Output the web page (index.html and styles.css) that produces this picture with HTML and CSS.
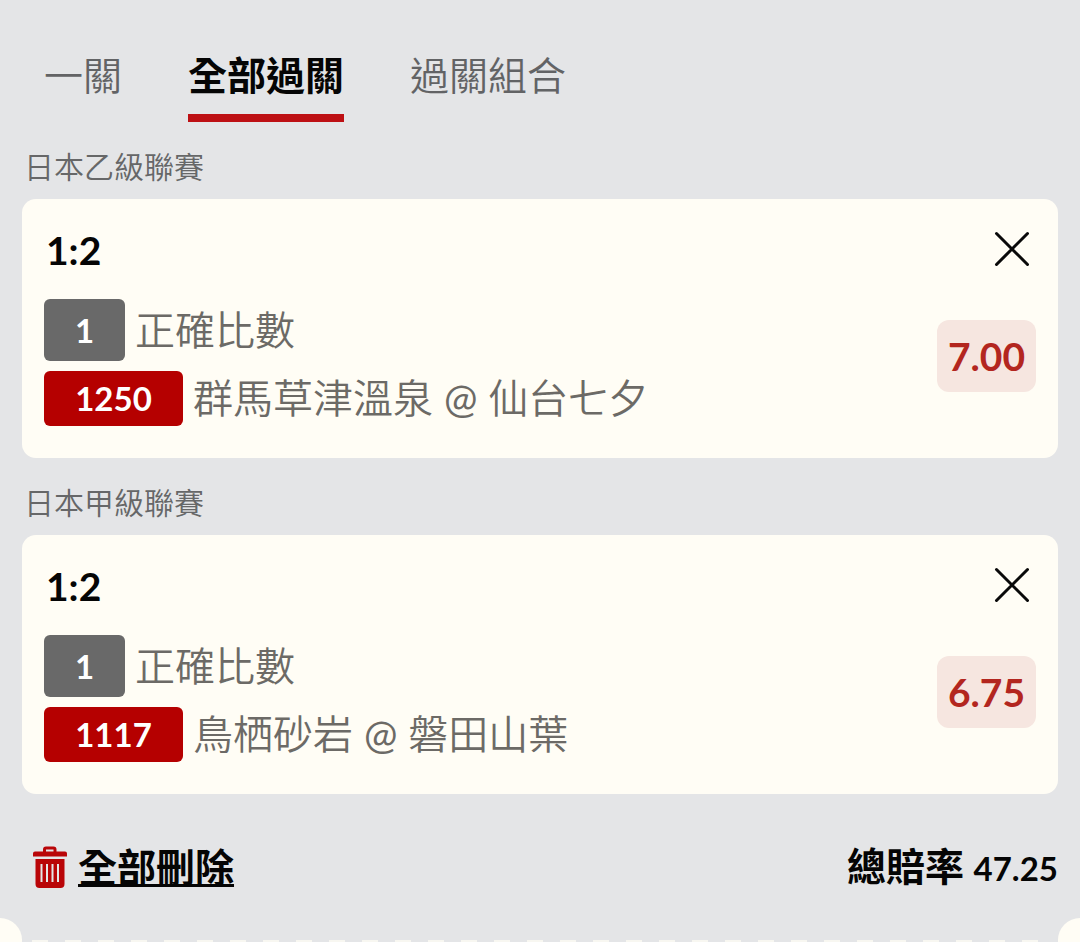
FILE: index.html
```html
<!DOCTYPE html>
<html lang="zh-Hant">
<head>
<meta charset="utf-8">
<meta name="viewport" content="width=device-width, initial-scale=1">
<title>過關</title>
<link rel="stylesheet" href="styles.css">
</head>
<body>
<main class="slip">
  <nav class="tabs">
    <button class="tab" type="button">一關</button>
    <button class="tab tab-active" type="button">全部過關</button>
    <button class="tab" type="button">過關組合</button>
  </nav>

  <section class="league">
    <h2 class="league-name">日本乙級聯賽</h2>
    <article class="card">
      <div class="card-main">
        <h3 class="pick">1:2</h3>
        <div class="bet">
          <div class="row"><span class="tag tag-count">1</span><span>正確比數</span></div>
          <div class="row"><span class="tag tag-match">1250</span><span>群馬草津溫泉 <span class="at">@</span> 仙台七夕</span></div>
        </div>
      </div>
      <div class="card-side">
        <button class="close" type="button" aria-label="移除">
          <svg class="close-icon" viewBox="0 0 36 36" aria-hidden="true"><path d="M2.5 2.5 33.5 33.5M33.5 2.5 2.5 33.5"/></svg>
        </button>
        <span class="odds">7.00</span>
      </div>
    </article>
  </section>

  <section class="league">
    <h2 class="league-name">日本甲級聯賽</h2>
    <article class="card">
      <div class="card-main">
        <h3 class="pick">1:2</h3>
        <div class="bet">
          <div class="row"><span class="tag tag-count">1</span><span>正確比數</span></div>
          <div class="row"><span class="tag tag-match">1117</span><span>鳥栖砂岩 <span class="at">@</span> 磐田山葉</span></div>
        </div>
      </div>
      <div class="card-side">
        <button class="close" type="button" aria-label="移除">
          <svg class="close-icon" viewBox="0 0 36 36" aria-hidden="true"><path d="M2.5 2.5 33.5 33.5M33.5 2.5 2.5 33.5"/></svg>
        </button>
        <span class="odds">6.75</span>
      </div>
    </article>
  </section>

  <footer class="summary">
    <button class="clear" type="button">
      <svg class="trash" viewBox="0 0 34 42" aria-hidden="true">
        <path class="trash-line" d="M11.5 6V3.5Q11.5 2 13 2H20.500Q22 2 22 3.500V6"/>
        <path class="trash-fill" fill-rule="evenodd" d="M2 5.500H32Q34 5.500 34 7.500V10.500H0V7.500Q0 5.500 2 5.500ZM2.500 13H31.500V38Q31.500 42 27.500 42H6.500Q2.500 42 2.500 38ZM7.500 18V36H9.500V18ZM13 18V36H15V18ZM18.500 18V36H20.500V18ZM24 18V36H26V18Z"/>
      </svg>
      <span class="clear-text">全部刪除</span>
    </button>
    <p class="total">總賠率 <span class="total-value">47.25</span></p>
  </footer>
</main>
<div class="perforation" aria-hidden="true">
  <span class="notch notch-left"></span>
  <span class="dashes"></span>
  <span class="notch notch-right"></span>
</div>
</body>
</html>
```
FILE: styles.css
```css
* { box-sizing: border-box; }
body {
  margin: 0;
  background: #e4e5e7;
  color: #050505;
  font-family: Lato, "Noto Sans CJK TC", sans-serif;
  overflow-x: hidden;
}
h2, h3, p { margin: 0; }
button {
  padding: 0;
  border: 0;
  background: none;
  color: inherit;
  font: inherit;
  cursor: pointer;
}
.slip { padding: 44px 22px 0; }
.tabs {
  display: flex;
  gap: 66px;
  padding-left: 22px;
}
.tab {
  height: 78px;
  padding-bottom: 8px;
  border-bottom: 8px solid transparent;
  color: #626365;
  font-size: 39px;
  line-height: 62px;
  font-weight: 350;
}
.tab-active {
  border-color: #bd1014;
  color: #050505;
  font-weight: 700;
}
.league-name {
  padding: 22px 0 11px 2px;
  color: #666768;
  font-size: 30px;
  line-height: 44px;
  font-weight: 350;
}
.card {
  display: flex;
  justify-content: space-between;
  padding: 24px 22px 32px;
  border-radius: 14px;
  background: #fffdf5;
}
.card-main {
  display: grid;
  gap: 22px;
}
.card-side {
  display: flex;
  flex-direction: column;
  align-items: flex-end;
  gap: 45px;
}
.pick {
  padding-left: 2px;
  font-size: 39px;
  line-height: 54px;
  font-weight: 700;
}
.close {
  display: flex;
  padding: 8px 6px 8px 0;
}
.close-icon {
  width: 36px;
  height: 36px;
  fill: none;
  stroke: #090909;
  stroke-width: 3;
  stroke-linecap: round;
}
.bet {
  display: grid;
  gap: 10px;
}
.row {
  display: flex;
  align-items: center;
  gap: 10px;
  color: #6c6a66;
  font-size: 40px;
  line-height: 55px;
  font-weight: 350;
}
.at { font-weight: 400; }
.tag {
  border-radius: 6px;
  color: #fff;
  font-size: 33px;
  font-weight: 700;
  text-align: center;
}
.tag-count {
  width: 81px;
  line-height: 62px;
  background: #696969;
}
.tag-match {
  width: 139px;
  line-height: 55px;
  background: #b50000;
}
.odds {
  padding: 0 11px;
  border-radius: 12px;
  background: #f6e6e0;
  color: #b3261f;
  font-size: 39px;
  line-height: 72px;
  font-weight: 700;
}
.summary {
  display: flex;
  justify-content: space-between;
  align-items: center;
  height: 124px;
  padding: 22px 0 0 11px;
}
.clear {
  display: flex;
  align-items: center;
  gap: 11px;
}
.trash { width: 34px; height: 42px; }
.trash-line { fill: none; stroke: #b90508; stroke-width: 3; }
.trash-fill { fill: #b90508; }
.clear-text {
  font-size: 39px;
  line-height: 56px;
  font-weight: 700;
  text-decoration: underline;
  text-decoration-thickness: 3px;
  text-decoration-skip-ink: none;
}
.total {
  font-size: 39px;
  line-height: 56px;
  font-weight: 700;
}
.total-value { font-size: 33px; }
.perforation {
  display: flex;
  justify-content: space-between;
  height: 24px;
  overflow: hidden;
}
.notch {
  width: 22px;
  height: 44px;
  background: #fffdf5;
}
.notch-left { border-radius: 0 22px 22px 0; }
.notch-right { border-radius: 22px 0 0 22px; }
.dashes {
  flex: 1;
  height: 2px;
  margin: 22px 10px 0;
  background: repeating-linear-gradient(90deg, #f8f7f1 0 16px, transparent 16px 33px);
}
```
